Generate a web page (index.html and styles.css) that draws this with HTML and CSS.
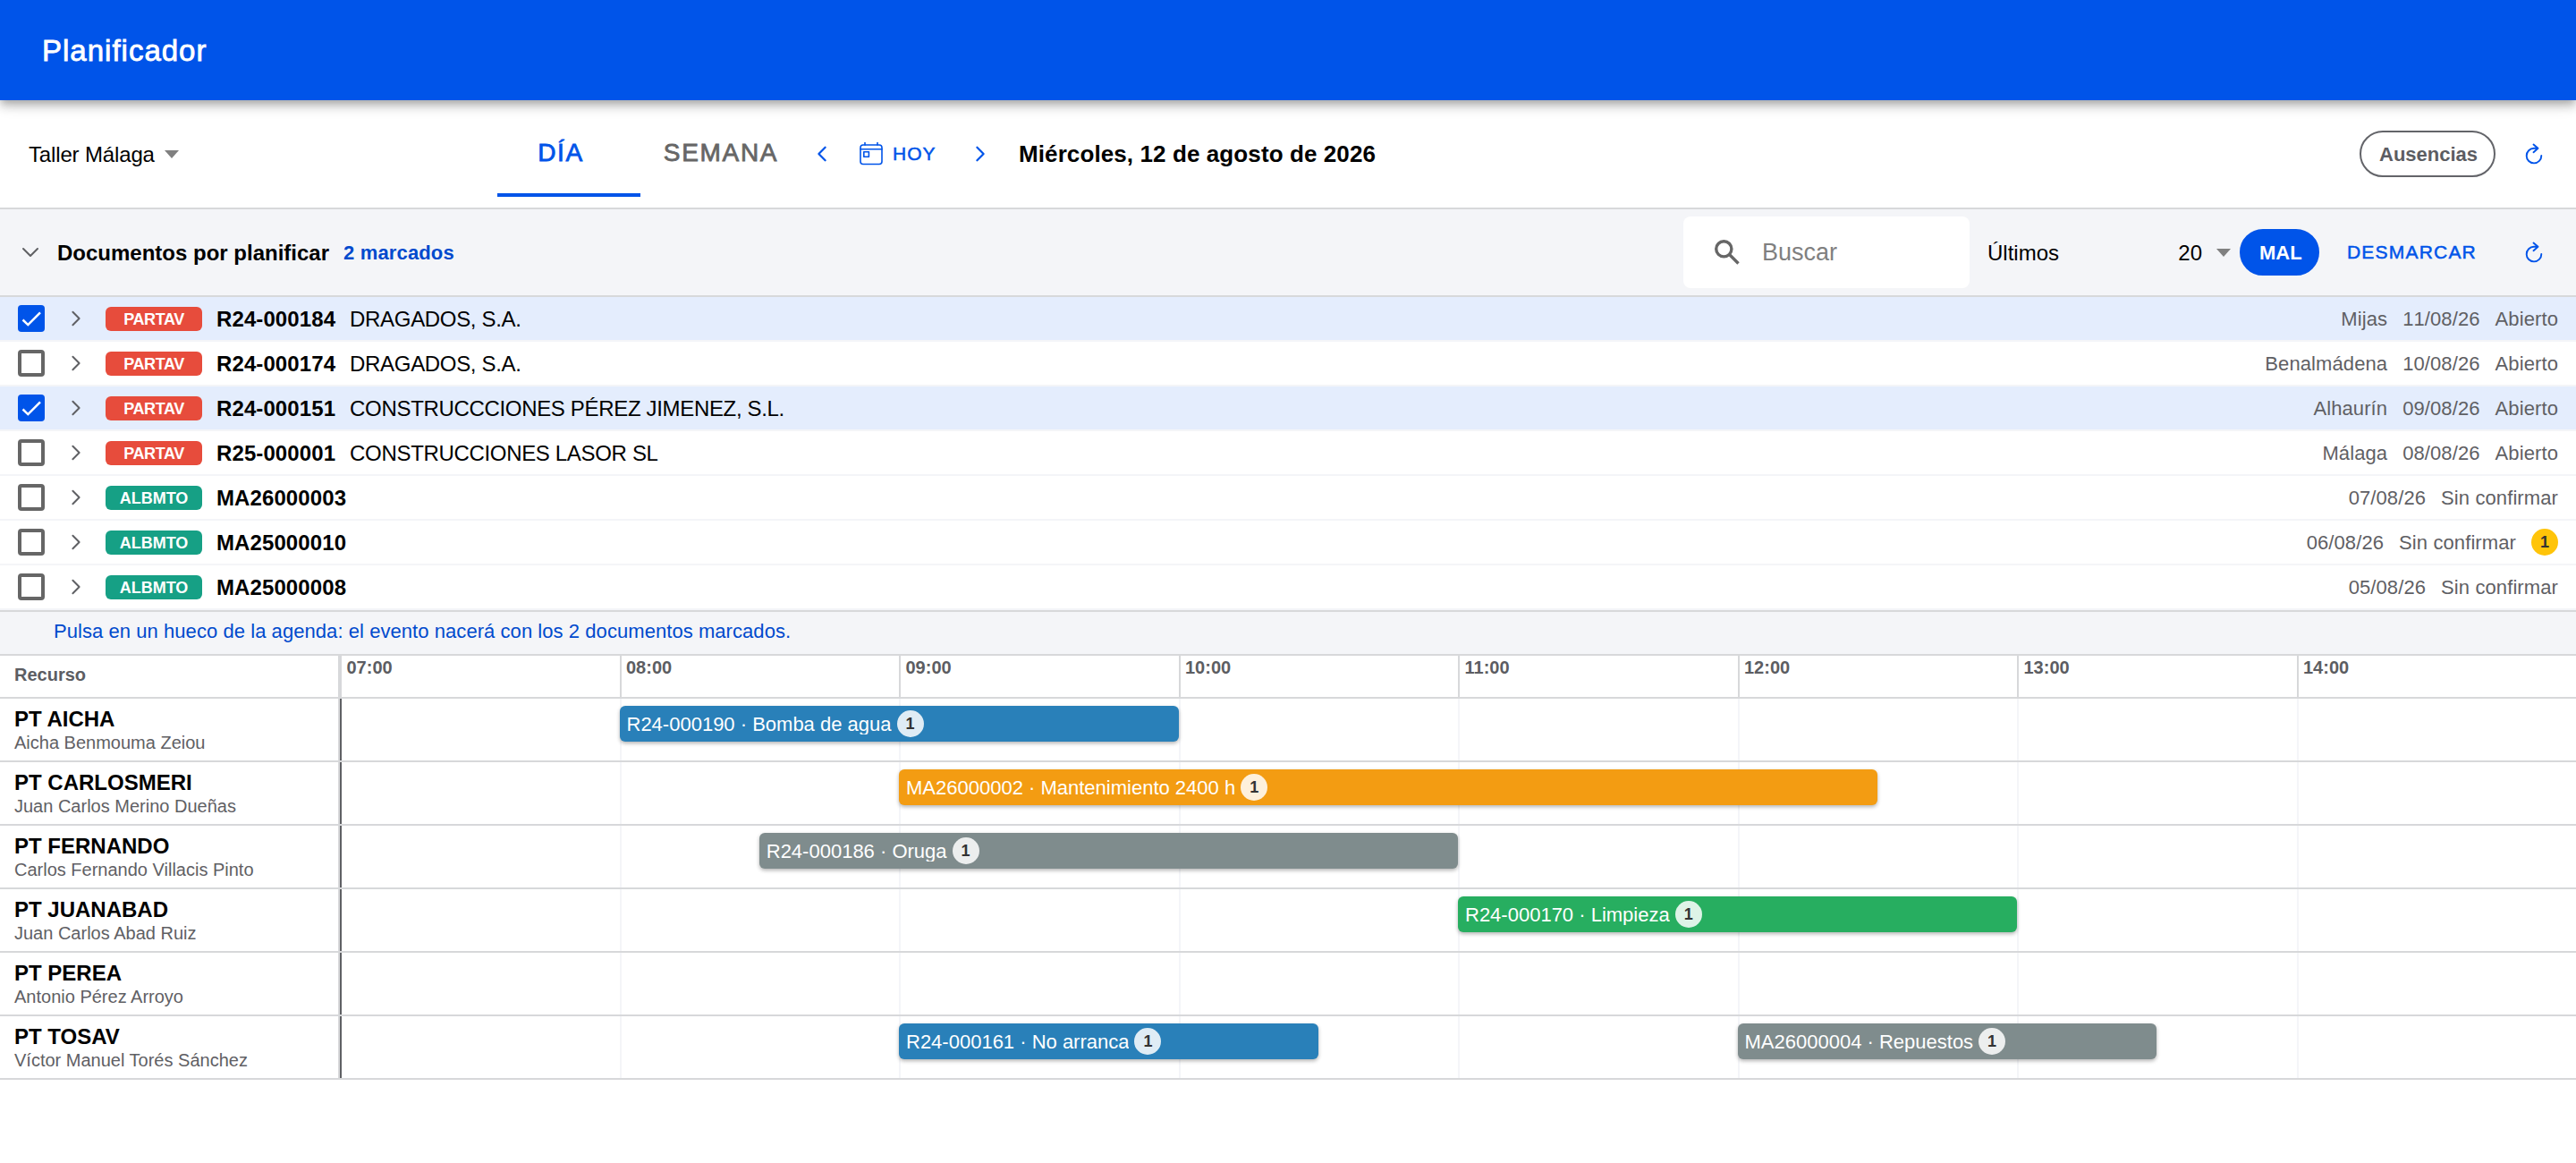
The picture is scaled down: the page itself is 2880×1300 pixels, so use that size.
FILE: index.html
```html
<!DOCTYPE html>
<html lang="es">
<head>
    <meta charset="utf-8">
    <title>Planificador</title>
    <link rel="stylesheet" href="styles.css">
</head>
<body>

<!-- Iconos reutilizados -->
<svg class="sprite">
    <symbol id="i-right" viewBox="0 0 12 20"><path d="M2 2l8 8-8 8" /></symbol>
    <symbol id="i-left" viewBox="0 0 12 20"><path d="M10 2l-8 8 8 8" /></symbol>
    <symbol id="i-down" viewBox="0 0 20 12"><path d="M2 2l8 8 8-8" /></symbol>
    <symbol id="i-refresh" viewBox="0 0 20 24"><path d="M9.5 1.5l5 4.3-5 4.4M14 5.8h-4a8.3 8.3 0 1 0 8.3 8.2" /></symbol>
    <symbol id="i-check" viewBox="0 0 30 30"><path d="M5.5 16.5l5.8 5.6L25 8.3" /></symbol>
</svg>

<header>
    <h1>Planificador</h1>
</header>

<div class="toolbar">
    <div class="select taller">Taller Málaga <i class="caret"></i></div>
    <div class="tabs">
        <a class="tab active">DÍA</a>
        <a class="tab">SEMANA</a>
    </div>
    <div class="nav">
        <svg class="icon arrow"><use href="#i-left" /></svg>
        <a class="link hoy">
            <svg class="cal" viewBox="0 0 26 26"><rect x="1" y="3" width="24" height="21.5" rx="3" /><path d="M1 7.8h24M6 .5V3M20 .5V3" /><rect x="4.8" y="10.8" width="5.6" height="5.4" /></svg>
            HOY
        </a>
        <svg class="icon arrow"><use href="#i-right" /></svg>
    </div>
    <h2 class="fecha">Miércoles, 12 de agosto de 2026</h2>
    <button class="chip outline">Ausencias</button>
    <svg class="icon refresh"><use href="#i-refresh" /></svg>
</div>

<div class="docs-head">
    <svg class="icon toggle"><use href="#i-down" /></svg>
    <h3>Documentos por planificar</h3>
    <span class="marcados">2 marcados</span>
    <label class="search">
        <svg class="lupa" viewBox="0 0 28 28"><circle cx="10.3" cy="10.3" r="8.6" /><path d="M16.5 16.5l10 10" /></svg>
        <span>Buscar</span>
    </label>
    <div class="select ultimos"><span>Últimos</span><span class="num">20</span><i class="caret"></i></div>
    <button class="chip solid">MAL</button>
    <a class="link desmarcar">DESMARCAR</a>
    <svg class="icon refresh"><use href="#i-refresh" /></svg>
</div>

<div class="docs">
    <div class="doc marked">
        <span class="check"><svg><use href="#i-check" /></svg></span>
        <svg class="icon expand"><use href="#i-right" /></svg>
        <span class="tipo partav">PARTAV</span>
        <b>R24-000184</b><span class="cliente">DRAGADOS, S.A.</span>
        <div class="meta"><span>Mijas</span><span>11/08/26</span><span>Abierto</span></div>
    </div>
    <div class="doc">
        <span class="check"></span>
        <svg class="icon expand"><use href="#i-right" /></svg>
        <span class="tipo partav">PARTAV</span>
        <b>R24-000174</b><span class="cliente">DRAGADOS, S.A.</span>
        <div class="meta"><span>Benalmádena</span><span>10/08/26</span><span>Abierto</span></div>
    </div>
    <div class="doc marked">
        <span class="check"><svg><use href="#i-check" /></svg></span>
        <svg class="icon expand"><use href="#i-right" /></svg>
        <span class="tipo partav">PARTAV</span>
        <b>R24-000151</b><span class="cliente">CONSTRUCCCIONES PÉREZ JIMENEZ, S.L.</span>
        <div class="meta"><span>Alhaurín</span><span>09/08/26</span><span>Abierto</span></div>
    </div>
    <div class="doc">
        <span class="check"></span>
        <svg class="icon expand"><use href="#i-right" /></svg>
        <span class="tipo partav">PARTAV</span>
        <b>R25-000001</b><span class="cliente">CONSTRUCCIONES LASOR SL</span>
        <div class="meta"><span>Málaga</span><span>08/08/26</span><span>Abierto</span></div>
    </div>
    <div class="doc">
        <span class="check"></span>
        <svg class="icon expand"><use href="#i-right" /></svg>
        <span class="tipo albmto">ALBMTO</span>
        <b>MA26000003</b>
        <div class="meta"><span>07/08/26</span><span>Sin confirmar</span></div>
    </div>
    <div class="doc">
        <span class="check"></span>
        <svg class="icon expand"><use href="#i-right" /></svg>
        <span class="tipo albmto">ALBMTO</span>
        <b>MA25000010</b>
        <div class="meta"><span>06/08/26</span><span>Sin confirmar</span><em class="count">1</em></div>
    </div>
    <div class="doc">
        <span class="check"></span>
        <svg class="icon expand"><use href="#i-right" /></svg>
        <span class="tipo albmto">ALBMTO</span>
        <b>MA25000008</b>
        <div class="meta"><span>05/08/26</span><span>Sin confirmar</span></div>
    </div>
</div>

<p class="hint">Pulsa en un hueco de la agenda: el evento nacerá con los 2 documentos marcados.</p>

<div class="agenda">
    <div class="row horas">
        <div class="recurso">Recurso</div>
        <div class="track">
            <i>07:00</i><i>08:00</i><i>09:00</i><i>10:00</i><i>11:00</i><i>12:00</i><i>13:00</i><i>14:00</i>
        </div>
    </div>
    <div class="row">
        <div class="recurso"><b>PT AICHA</b><small>Aicha Benmouma Zeiou</small></div>
        <div class="track">
            <i></i><i></i><i></i><i></i><i></i><i></i><i></i><i></i>
            <div class="evento azul" style="grid-column: 3 / 7"><span>R24-000190 · Bomba de agua</span><em class="count">1</em></div>
        </div>
    </div>
    <div class="row">
        <div class="recurso"><b>PT CARLOSMERI</b><small>Juan Carlos Merino Dueñas</small></div>
        <div class="track">
            <i></i><i></i><i></i><i></i><i></i><i></i><i></i><i></i>
            <div class="evento naranja" style="grid-column: 5 / 12"><span>MA26000002 · Mantenimiento 2400 h</span><em class="count">1</em></div>
        </div>
    </div>
    <div class="row">
        <div class="recurso"><b>PT FERNANDO</b><small>Carlos Fernando Villacis Pinto</small></div>
        <div class="track">
            <i></i><i></i><i></i><i></i><i></i><i></i><i></i><i></i>
            <div class="evento gris" style="grid-column: 4 / 9"><span>R24-000186 · Oruga</span><em class="count">1</em></div>
        </div>
    </div>
    <div class="row">
        <div class="recurso"><b>PT JUANABAD</b><small>Juan Carlos Abad Ruiz</small></div>
        <div class="track">
            <i></i><i></i><i></i><i></i><i></i><i></i><i></i><i></i>
            <div class="evento verde" style="grid-column: 9 / 13"><span>R24-000170 · Limpieza</span><em class="count">1</em></div>
        </div>
    </div>
    <div class="row">
        <div class="recurso"><b>PT PEREA</b><small>Antonio Pérez Arroyo</small></div>
        <div class="track">
            <i></i><i></i><i></i><i></i><i></i><i></i><i></i><i></i>
        </div>
    </div>
    <div class="row">
        <div class="recurso"><b>PT TOSAV</b><small>Víctor Manuel Torés Sánchez</small></div>
        <div class="track">
            <i></i><i></i><i></i><i></i><i></i><i></i><i></i><i></i>
            <div class="evento azul" style="grid-column: 5 / 8"><span>R24-000161 · No arranca</span><em class="count">1</em></div>
            <div class="evento gris" style="grid-column: 11 / 14"><span>MA26000004 · Repuestos</span><em class="count">1</em></div>
        </div>
    </div>
</div>

</body>
</html>
```
FILE: styles.css
```css
* {
    box-sizing: border-box;
}

body {
    margin: 0;
    background: white;
    color: black;
    font-family: "Liberation Sans", Arial, Helvetica, sans-serif;
    font-size: 24px;
}

h1, h2, h3, p {
    margin: 0;
}

i, em {
    font-style: normal;
}

.sprite {
    display: none;
}

/* Cabecera */
header {
    position: relative;
    z-index: 1;
    height: 112px;
    padding: 0 47px;
    background: #0054e9;
    box-shadow: 0 4px 8px -2px rgba(0,0,0,.2), 0 8px 10px 0 rgba(0,0,0,.14), 0 2px 20px 0 rgba(0,0,0,.12);
}

h1 {
    color: white;
    font-size: 33px;
    font-weight: normal;
    line-height: 113px;
    letter-spacing: 1px;
    -webkit-text-stroke: .8px white;
}

/* Barra de herramientas */
.toolbar, .docs-head {
    display: flex;
    align-items: center;
    border-bottom: 2px solid #d7d8da;
}

.toolbar {
    height: 122px;
    padding: 0 37px 0 32px;
}

.select {
    display: flex;
    align-items: center;
}

.caret {
    border: 8px solid transparent;
    border-top: 9px solid #808080;
    border-bottom: 0;
}

.taller {
    width: 524px;
    padding-top: 2px;
    letter-spacing: -.15px;
}

.taller .caret {
    margin: -2px 0 0 11px;
}

.tabs {
    display: flex;
}

.tab {
    width: 160px;
    height: 96px;
    padding-right: 18px;
    border-bottom: 4px solid transparent;
    color: #666;
    font-size: 28px;
    line-height: 94px;
    letter-spacing: 1.68px;
    text-align: center;
    -webkit-text-stroke: .8px;
}

.tab + .tab {
    width: 180px;
    padding: 0;
}

.tab.active {
    border-color: #0054e9;
    color: #0054e9;
}

.nav {
    display: flex;
    align-items: center;
    padding-left: 17px;
}

.icon, .cal, .lupa {
    fill: none;
    stroke: #0054e9;
    stroke-width: 2.5;
    stroke-linecap: round;
    stroke-linejoin: round;
    flex-shrink: 0;
}

.arrow {
    width: 12px;
    height: 18px;
}

.link {
    display: flex;
    align-items: center;
    color: #0054e9;
    font-size: 21px;
    letter-spacing: 1.2px;
    -webkit-text-stroke: .5px;
}

.hoy {
    width: 129px;
    margin: 0 0 0 36px;
    letter-spacing: 1px;
}

.cal {
    width: 26px;
    height: 26px;
    margin-right: 11px;
    stroke-width: 1.6;
}

.fecha {
    flex: 1;
    margin-left: 37px;
    padding-top: 1px;
    font-size: 26px;
    letter-spacing: .1px;
}

.chip {
    height: 52px;
    padding: 1px 20px 0;
    border: 2px solid #636469;
    border-radius: 26px;
    background: none;
    color: #5c5d62;
    font: bold 22px "Liberation Sans", Arial, sans-serif;
}

.outline {
    width: 152px;
}

.refresh {
    width: 20px;
    height: 24px;
    margin-left: 33px;
    stroke-width: 1.9;
}

/* Documentos por planificar */
.docs-head {
    height: 98px;
    padding: 0 37px 0 24px;
    background: #f4f5f8;
}

.toggle {
    width: 20px;
    height: 12px;
    stroke: #5f6064;
    stroke-width: 2;
}

h3 {
    margin-left: 20px;
    padding-top: 2px;
    font-size: 24px;
}

.marcados {
    flex: 1;
    margin-left: 16px;
    padding-top: 1px;
    color: #004acd;
    font-size: 22px;
    font-weight: bold;
    letter-spacing: .15px;
}

.search {
    display: flex;
    align-items: center;
    width: 320px;
    height: 80px;
    padding-left: 35px;
    border-radius: 8px;
    background: white;
    color: #808080;
    font-size: 27px;
}

.lupa {
    width: 28px;
    height: 28px;
    margin-right: 25px;
    stroke: #666;
    stroke-width: 3.4;
    stroke-linecap: butt;
}

.ultimos {
    width: 292px;
    padding-left: 20px;
}

.ultimos span {
    padding-top: 2px;
}

.num {
    margin-left: auto;
}

.ultimos .caret {
    margin: 0 0 0 16px;
}

.solid {
    width: 89px;
    margin-left: 10px;
    border-color: #0054e9;
    background: #0054e9;
    color: white;
}

.desmarcar {
    width: 197px;
    padding-left: 31px;
}

/* Lista de documentos */
.docs {
    border-bottom: 2px solid #d7d8da;
}

.doc {
    display: flex;
    align-items: center;
    height: 50px;
    padding: 0 20px;
    border-bottom: 2px solid #f4f5f8;
}

.doc.marked {
    background: #e4edfd;
}

.check {
    width: 30px;
    height: 30px;
    border: 4px solid #666;
    border-radius: 4px;
}

.marked .check {
    border: 0;
    background: #0054e9;
}

.check svg {
    display: block;
    width: 30px;
    height: 30px;
    fill: none;
    stroke: white;
    stroke-width: 2.5;
}

.expand {
    width: 12px;
    height: 18px;
    margin: 0 27.5px 0 28.5px;
    stroke: #5f6064;
    stroke-width: 2.2;
}

.tipo {
    width: 108px;
    height: 27px;
    margin-right: 16px;
    border-radius: 6px;
    color: white;
    font-size: 18px;
    font-weight: bold;
    line-height: 28px;
    text-align: center;
}

.partav {
    background: #e74c3c;
    letter-spacing: -.4px;
}

.albmto {
    background: #16a085;
}

.doc > b {
    margin-right: 16px;
    padding-top: 2px;
    letter-spacing: .1px;
}

.cliente {
    padding-top: 2px;
    letter-spacing: -.33px;
}

.meta {
    display: flex;
    align-items: center;
    gap: 17px;
    margin-left: auto;
    color: #5f6064;
    font-size: 22px;
    font-kerning: none;
    letter-spacing: .1px;
}

.meta span {
    padding-top: 1px;
}

.count {
    width: 30px;
    height: 30px;
    border-radius: 15px;
    background: #ffc409;
    color: #333;
    font-size: 18px;
    font-weight: bold;
    line-height: 31px;
    text-align: center;
}

.hint {
    height: 49px;
    padding-left: 60px;
    border-bottom: 2px solid #d7d8da;
    background: #f4f5f8;
    color: #004acd;
    font-size: 22px;
    line-height: 43px;
    letter-spacing: .06px;
}

/* Agenda */
.row {
    display: flex;
    height: 71px;
    border-bottom: 2px solid #d7d8da;
}

.recurso {
    width: 380px;
    padding: 9px 16px 0;
    border-right: 2px solid #d7d8da;
}

.recurso b, .recurso small {
    display: block;
    line-height: 27px;
}

.recurso small {
    color: #5f6064;
    font-size: 20px;
}

.track {
    flex: 1;
    display: grid;
    grid-template-columns: repeat(16, 1fr);
}

/* la hora ocupa siempre su columna */
.track > i {
    grid-row: 1;
    border-left: 2px solid #f4f5f8;
}

.track > i:nth-child(1) { grid-column: 1 / 3; }
.track > i:nth-child(2) { grid-column: 3 / 5; }
.track > i:nth-child(3) { grid-column: 5 / 7; }
.track > i:nth-child(4) { grid-column: 7 / 9; }
.track > i:nth-child(5) { grid-column: 9 / 11; }
.track > i:nth-child(6) { grid-column: 11 / 13; }
.track > i:nth-child(7) { grid-column: 13 / 15; }
.track > i:nth-child(8) { grid-column: 15 / 17; }

.track > i:first-child {
    border-color: #5f6064;
}

.horas {
    height: 48px;
    color: #5c5d62;
    font-size: 20px;
    font-weight: bold;
}

.horas .recurso {
    padding-top: 10px;
}

.horas .track > i {
    padding: 2px 5.5px;
    border-color: #d7d8da;
}

.evento {
    grid-row: 1;
    display: flex;
    align-items: center;
    height: 40px;
    margin-top: 8px;
    padding: 0 8px;
    border-radius: 6px;
    box-shadow: 0 2px 4px rgba(0,0,0,.3);
    color: white;
    font-size: 22px;
    white-space: nowrap;
}

.evento span {
    height: 23px;
    line-height: 24px;
    overflow: hidden;
}

.evento .count {
    margin-left: 6px;
    background: rgba(255,255,255,.85);
}

.azul { background: #2980b9; }
.naranja { background: #f39c12; }
.gris { background: #7f8c8d; }
.verde { background: #27ae60; }
```
